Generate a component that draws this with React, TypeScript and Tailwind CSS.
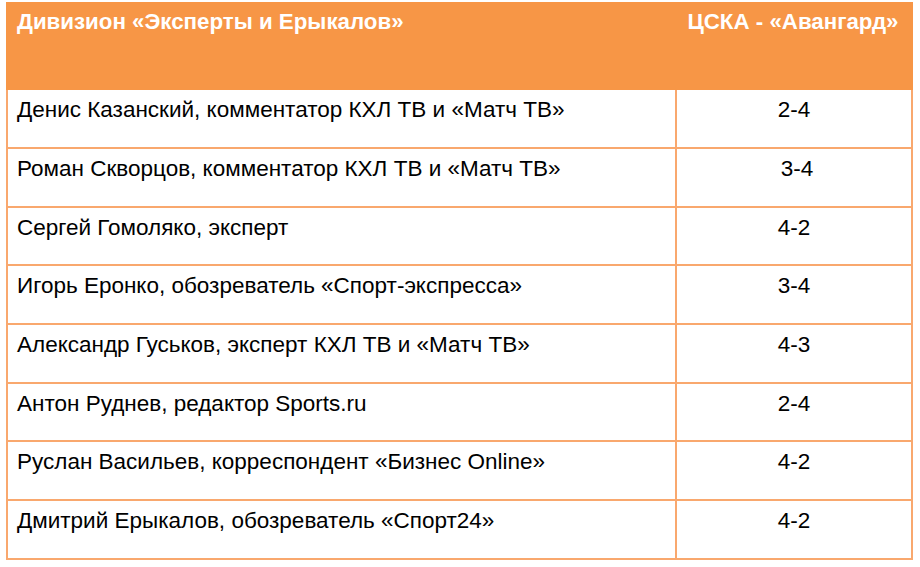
import React from "react";

const rows: [string, string][] = [
  ["Денис Казанский, комментатор КХЛ ТВ и «Матч ТВ»", "2-4"],
  ["Роман Скворцов, комментатор КХЛ ТВ и «Матч ТВ»", "\u00a03-4"],
  ["Сергей Гомоляко, эксперт", "4-2"],
  ["Игорь Еронко, обозреватель «Спорт-экспресса»", "3-4"],
  ["Александр Гуськов, эксперт КХЛ ТВ и «Матч ТВ»", "4-3"],
  ["Антон Руднев, редактор Sports.ru", "2-4"],
  ["Руслан Васильев, корреспондент «Бизнес Online»", "4-2"],
  ["Дмитрий Ерыкалов, обозреватель «Спорт24»", "4-2"],
];

const heights = ["h-[59px]", "h-[59px]", "h-[58px]", "h-[59px]", "h-[59px]", "h-[58px]", "h-[59px]", "h-[59px]"];

export default function App() {
  return (
    <div className="w-[920px] h-[567px] bg-white pt-[2px] pl-[6px] font-['Liberation_Sans',Arial,sans-serif]">
      <div className="w-[907px]">
        <div className="flex h-[88px] bg-[#F79646] text-white font-bold text-[22.3px] leading-[26px]">
          <div className="w-[669px] pl-[11px] pt-[7px]">Дивизион «Эксперты и Ерыкалов»</div>
          <div className="flex-1 pt-[7px] text-center pr-[2px]">ЦСКА - «Авангард»</div>
        </div>
        <div className="border-x-2 border-[#F9A86E]">
          {rows.map(([name, score], i) => (
            <div key={i} className={`flex ${heights[i]} border-b-2 border-[#F9A86E] text-black text-[22.5px] leading-[26px]`}>
              <div className="w-[667px] pl-[9px] pt-[7px]">{name}</div>
              <div className="flex-1 border-l-2 border-[#F9A86E] pt-[7px] text-center">{score}</div>
            </div>
          ))}
        </div>
      </div>
    </div>
  );
}
